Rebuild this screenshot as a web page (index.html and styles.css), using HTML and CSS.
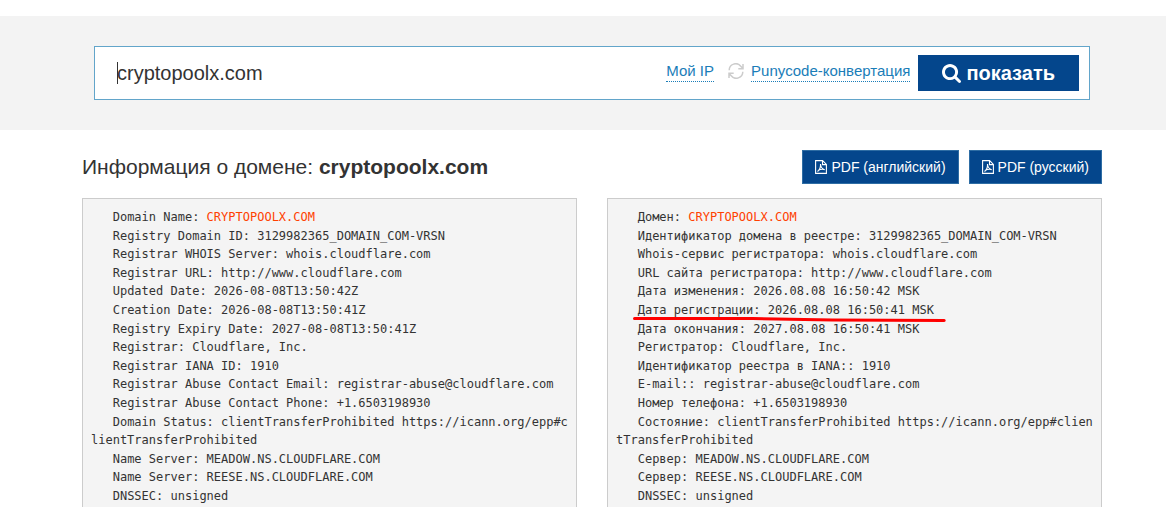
FILE: index.html
```html
<!DOCTYPE html>
<html lang="ru">
<head>
<meta charset="utf-8">
<title>Whois cryptopoolx.com</title>
<link rel="stylesheet" href="styles.css">
</head>
<body>
<svg class="sprite" aria-hidden="true">
  <symbol id="pdf" viewBox="0 0 12 14"><path d="M.6 .6h7l3.800 3.800v9H.6zM7.500 .6v4h4M5.500 4c.3 3.500-1 6-3 7.500M5.500 4c.2 3 1.500 5 4.200 5.800M3.300 10.200c2-.9 4-1.200 6.400-.6" fill="none" stroke="currentColor" stroke-width="1.100"/></symbol>
</svg>
<header class="search-bar">
  <form class="search">
    <label class="search-field">
      <input class="search-input" type="text" value="cryptopoolx.com" aria-label="Домен">
    </label>
    <div class="hints">
      <a class="hint" href="#ip">Мой IP</a>
      <svg class="icon-refresh" viewBox="0 0 16 16" aria-hidden="true"><path d="M1.200 7.200A6.500 6.500 0 0 1 12.800 3.200L14.500 5M15 1v4.700h-4.700M14.800 8.800A6.500 6.500 0 0 1 3.200 12.800L1.500 11M1 15v-4.700h4.700" fill="none" stroke="currentColor" stroke-width="1.500"/></svg>
      <a class="hint" href="#punycode">Punycode-конвертация</a>
    </div>
    <button class="submit" type="submit"><svg class="icon-search" viewBox="64 128 1664 1664" aria-hidden="true"><path fill="currentColor" d="M1216 832q0-185-131.500-316.500t-316.500-131.500-316.500 131.500-131.500 316.500 131.500 316.500 316.500 131.500 316.500-131.500 131.500-316.500zm512 832q0 52-38 90t-90 38q-54 0-90-38l-343-342q-179 124-399 124-143 0-273.500-55.500t-225-150-150-225-55.500-273.500 55.500-273.500 150-225 225-150 273.500-55.500 273.500 55.500 225 150 150 225 55.500 273.500q0 220-124 399l343 343q37 37 37 90z"/></svg>показать</button>
  </form>
</header>
<main class="content">
  <div class="title-row">
    <h1 class="title">Информация о домене: <strong>cryptopoolx.com</strong></h1>
    <button class="pdf" type="button"><svg class="icon-pdf" aria-hidden="true"><use href="#pdf"/></svg>PDF (английский)</button>
    <button class="pdf" type="button"><svg class="icon-pdf" aria-hidden="true"><use href="#pdf"/></svg>PDF (русский)</button>
  </div>
  <div class="records">
<pre class="record">   Domain Name: <span class="domain">CRYPTOPOOLX.COM</span>
   Registry Domain ID: 3129982365_DOMAIN_COM-VRSN
   Registrar WHOIS Server: whois.cloudflare.com
   Registrar URL: http://www.cloudflare.com
   Updated Date: 2026-08-08T13:50:42Z
   Creation Date: 2026-08-08T13:50:41Z
   Registry Expiry Date: 2027-08-08T13:50:41Z
   Registrar: Cloudflare, Inc.
   Registrar IANA ID: 1910
   Registrar Abuse Contact Email: registrar-abuse@cloudflare.com
   Registrar Abuse Contact Phone: +1.6503198930
   Domain Status: clientTransferProhibited https://icann.org/epp#clientTransferProhibited
   Name Server: MEADOW.NS.CLOUDFLARE.COM
   Name Server: REESE.NS.CLOUDFLARE.COM
   DNSSEC: unsigned</pre>
<pre class="record">   Домен: <span class="domain">CRYPTOPOOLX.COM</span>
   Идентификатор домена в реестре: 3129982365_DOMAIN_COM-VRSN
   Whois-сервис регистратора: whois.cloudflare.com
   URL сайта регистратора: http://www.cloudflare.com
   Дата изменения: 2026.08.08 16:50:42 MSK
   <span class="marked">Дата регистрации: 2026.08.08 16:50:41 MSK<svg class="marker" viewBox="0 0 314 6" preserveAspectRatio="none" aria-hidden="true"><path d="M1.500 1.500L120 1.500L200 3L312 3.500" fill="none" stroke="currentColor" stroke-width="3" stroke-linecap="round"/></svg></span>
   Дата окончания: 2027.08.08 16:50:41 MSK
   Регистратор: Cloudflare, Inc.
   Идентификатор реестра в IANA:: 1910
   E-mail:: registrar-abuse@cloudflare.com
   Номер телефона: +1.6503198930
   Состояние: clientTransferProhibited https://icann.org/epp#clientTransferProhibited
   Сервер: MEADOW.NS.CLOUDFLARE.COM
   Сервер: REESE.NS.CLOUDFLARE.COM
   DNSSEC: unsigned</pre>
  </div>
</main>
</body>
</html>
```
FILE: styles.css
```css
* { box-sizing: border-box; }
body {
  margin: 0;
  padding-top: 16px;
  background: #fff;
  color: #333;
  font-family: "Liberation Sans", Arial, sans-serif;
  font-size: 14px;
}
.sprite { display: none; }
.search-bar { padding: 30px 76px 30px 94px; background: #f3f3f3; }
.search {
  display: flex;
  align-items: center;
  padding: 8px 10px 8px 22px;
  border: 1px solid #62a5ca;
  background: #fff;
}
.search-field { position: relative; flex: 1; min-width: 0; }
.search-field::before {
  content: "";
  position: absolute;
  left: 0;
  top: 0;
  width: 1px;
  height: 22px;
  background: #333;
}
.search-input {
  display: block;
  width: 100%;
  padding: 0;
  border: 0;
  outline: 0;
  background: transparent;
  color: #333;
  font: 20px/22px "Liberation Sans", Arial, sans-serif;
}
.hints { display: flex; align-items: center; padding-bottom: 4px; }
.hint {
  border-bottom: 1px dotted #1a7db8;
  color: #1a7db8;
  font-size: 15px;
  line-height: 20px;
  text-decoration: none;
  white-space: nowrap;
}
.icon-refresh { width: 16px; height: 16px; margin: 0 7px 0 14px; color: #ccc; }
.submit {
  display: flex;
  align-items: center;
  gap: 5px;
  margin-left: 8px;
  padding: 0 24px;
  border: 0;
  background: #04468c;
  color: #fff;
  font: bold 20px/36px "Liberation Sans", Arial, sans-serif;
}
.icon-search { width: 19px; height: 19px; }
.content { padding: 20px 64px 20px 82px; }
.title-row { display: flex; align-items: center; gap: 10px; margin-bottom: 14px; }
.title { flex: 1; margin: 0; font-size: 21px; font-weight: normal; line-height: 34px; }
.pdf {
  display: flex;
  align-items: center;
  gap: 4px;
  padding: 0 12px;
  border: 1px solid #2e6da4;
  background: #04468c;
  color: #fff;
  font: 14px/32px "Liberation Sans", Arial, sans-serif;
}
.icon-pdf { width: 12px; height: 14px; }
.records { display: grid; grid-template-columns: 1fr 1fr; gap: 30px; }
.record {
  min-width: 0;
  margin: 0;
  padding: 9px 8px;
  border: 1px solid #ccc;
  background: #f4f4f4;
  font-family: "DejaVu Sans Mono", Consolas, monospace;
  font-size: 12px;
  line-height: 1.55;
  white-space: pre-wrap;
  word-break: break-all;
}
.domain { color: #ff4000; }
.marked { display: inline-block; position: relative; }
.marker { position: absolute; left: -5px; bottom: -3px; width: calc(100% + 17px); height: 6px; color: #f00; }
```
